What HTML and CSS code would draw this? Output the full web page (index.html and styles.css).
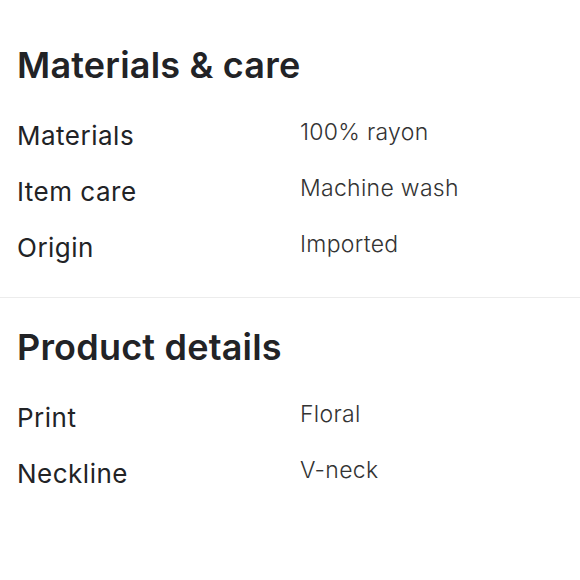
FILE: index.html
```html
<!DOCTYPE html>
<html>
<head>
<meta charset="utf-8">
<link rel="stylesheet" href="styles.css">
</head>
<body>
<section class="section first">
  <h2 class="title">Materials &amp; care</h2>
  <div class="row"><span class="label">Materials</span><span class="value">100% rayon</span></div>
  <div class="row"><span class="label">Item care</span><span class="value">Machine wash</span></div>
  <div class="row"><span class="label">Origin</span><span class="value">Imported</span></div>
</section>
<div class="divider"></div>
<section class="section">
  <h2 class="title">Product details</h2>
  <div class="row"><span class="label">Print</span><span class="value">Floral</span></div>
  <div class="row"><span class="label">Neckline</span><span class="value">V-neck</span></div>
</section>
</body>
</html>
```
FILE: styles.css
```css
html, body {
  margin: 0;
  padding: 0;
  background: #fff;
}
body {
  font-family: Inter, "Open Sans", sans-serif;
  color: #222326;
  width: 580px;
}
.section {
  padding: 0 17px;
}
.section.first {
  padding-top: 44px;
  padding-bottom: 22px;
}
.section:not(.first) {
  padding-top: 28px;
}
.title {
  margin: 0 0 21px 0;
  font-size: 36px;
  font-weight: 600;
  line-height: 42px;
  letter-spacing: 0.2px;
}
.row {
  display: grid;
  grid-template-columns: 283px 1fr;
  height: 56px;
  align-items: center;
}
.label {
  font-size: 26px;
  font-weight: 400;
  letter-spacing: 0.5px;
}
.value {
  font-size: 23px;
  font-weight: 300;
  color: #333;
  margin-top: -6px;
  letter-spacing: 0.3px;
}
.divider {
  height: 1px;
  background: #ececec;
}
```
